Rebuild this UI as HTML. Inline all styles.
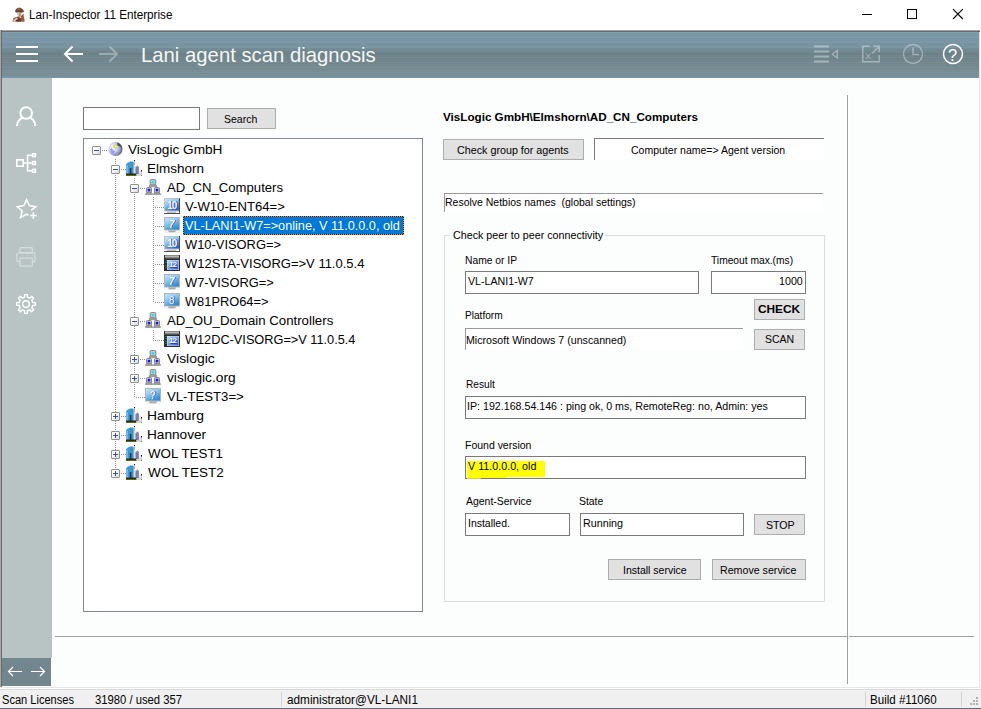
<!DOCTYPE html>
<html><head><meta charset="utf-8"><title>Lan-Inspector 11 Enterprise</title>
<style>
*{box-sizing:border-box;margin:0;padding:0}
html,body{width:981px;height:709px;overflow:hidden;background:#fff}
body{position:relative;font-family:"Liberation Sans",sans-serif;color:#000}
.a{position:absolute;white-space:nowrap}
.t{position:absolute;white-space:nowrap;line-height:1;transform-origin:0 0}
#frameL{left:0;top:30px;width:2px;height:657px;background:linear-gradient(90deg,#a6a6a6 50%,#696969 50%)}
#frameT{left:0;top:30px;width:980px;height:2px;background:linear-gradient(#a3a3a3 50%,#696969 50%)}
#frameR{left:979px;top:32px;width:1px;height:656px;background:#e3e3e3}
#frameB2{left:0;top:687px;width:980px;height:1px;background:#e6e6e6}
#hdr{left:2px;top:32px;width:977px;height:46px;background:repeating-linear-gradient(rgba(255,255,255,.035) 0,rgba(255,255,255,.035) 1px,rgba(0,0,0,.02) 1px,rgba(0,0,0,.02) 2px,transparent 2px,transparent 5px),linear-gradient(#7ba1b9 0,#7b98a9 1px,#7a96a6 8px,#7893a1 15px,#71898f 18.500px,#6c8188 21.500px,#6f858b 25px,#74898f 32px,#7a9097 44px,#7393a9 45px,#7393a9 46px)}
#side{left:2px;top:78px;width:50px;height:580px;background:#b8c4c3}
#sideB{left:2px;top:658px;width:49px;height:28px;background:#72868d}
#content{left:52px;top:78px;width:927px;height:609px;background:#fcfdfd}
#status{left:0;top:689px;width:981px;height:19px;background:#f0f0f0;border-top:1px solid #d9d9d9}
#frameB{left:0;top:708px;width:981px;height:1px;background:#5f6e74}
.seg{font-size:12px}
.tree{font-size:13px}
.f11{font-size:11px}
.btn{position:absolute;background:#e1e1e1;border:1px solid #adadad;font-size:11px;text-align:center;white-space:nowrap}
.inp{position:absolute;background:#fff;border:1px solid #7a7a7a}
.dv{width:1px;background-image:linear-gradient(#8c8c8c 50%,transparent 50%);background-size:1px 2px}
.dh{height:1px;background-image:linear-gradient(90deg,#8c8c8c 50%,transparent 50%);background-size:2px 1px}
.ln{position:absolute;background:#a0a0a0}
</style></head><body>
<div class="a" id="frameT"></div><div class="a" id="frameL"></div><div class="a" id="frameR"></div><div class="a" id="frameB2"></div>
<div class="a" id="hdr"></div>
<div class="a" id="side"></div><div class="a" id="sideB"></div>
<div class="a" id="content"></div>
<div class="a" id="status"></div><div class="a" id="frameB"></div>

<!-- TITLEBAR -->
<svg class="a" style="left:12px;top:7px" width="13" height="15" viewBox="0 0 13 15"><path d="M3 4.500 Q3.500 1 7.500 0.500 Q11.500 1.500 12 5 L9.500 5.800 L4 5.500 Z" fill="#6b4531"/><path d="M5 1.500 Q7 0.800 9 1.800 L8 3 L5.500 3 Z" fill="#94664a"/><path d="M5 5.500 L9.500 6 L9 10 L6 10.500 Z" fill="#cdbcae"/><path d="M7 6.500 L8.800 6.500 L8.500 9.500 L7.300 9.500 Z" fill="#9a8f8a"/><path d="M0.500 14.500 L1.500 11 L6 9.500 L9 11 L12 10 L12.500 14.500 Z" fill="#7e4a30"/><path d="M1 13 L5 10.500 L6 12 L2 14.500 Z" fill="#e2d2c4"/><path d="M9 9 L11.500 6.500 L12.300 14.500 L9.500 14.500 Z" fill="#a05c3c"/><path d="M4 13 L8 12 L9 14.500 L4.500 14.500 Z" fill="#5a3322"/></svg>
<div class="t seg" id="ttl" style="transform:scaleX(0.9357);left:28.61px;top:8.5px;font-size:12.5px">Lan-Inspector 11 Enterprise</div>
<svg class="a" style="left:850px;top:0" width="131" height="30" viewBox="0 0 131 30"><g stroke="#000" stroke-width="1" fill="none"><path d="M12 14.5 H22"/><rect x="57.5" y="9.5" width="9" height="9"/><path d="M103 9.200 L112.800 19 M112.800 9.200 L103 19" stroke-width="1.1"/></g></svg>

<!-- HEADER -->
<svg class="a" style="left:2px;top:32px" width="977" height="46" viewBox="2 32 977 46">
 <g stroke="#fff" stroke-width="2" fill="none">
  <path d="M16 47 H38 M16 54 H38 M16 61 H38"/>
  <path d="M83 54 H65 M72.5 46.5 L65 54 L72.5 61.5"/>
  <path d="M99 54 H117 M109.5 46.5 L117 54 L109.5 61.5" opacity="0.32"/>
 </g>
 <g stroke="#fff" fill="none" opacity="0.36">
  <path d="M814 46.5 H829 M814 51.5 H829 M814 56.5 H829 M814 61.5 H829" stroke-width="1.8"/>
  <path d="M837.3 50.3 V58 L832.3 54.2 Z" stroke-width="1.4" stroke-linejoin="round"/>
  <path d="M870 46.3 H862.8 V61.800 H879.2 V55" stroke-width="1.5"/>
  <path d="M872 53.5 L879 46.5 M873.5 46.3 H879.2 V52" stroke-width="1.6"/>
  <path d="M866 53.5 L870.5 59 M870.5 53.5 L866 59" stroke-width="1.1"/>
  <circle cx="913" cy="54" r="9.5" stroke-width="1.3"/>
  <path d="M913 47.5 V54.5 H919" stroke-width="1.5"/>
 </g>
 <circle cx="953" cy="54" r="9.5" stroke="#fff" stroke-width="1.5" fill="none"/>
</svg>
<div class="t" id="htitle" style="transform:scaleX(0.9667);left:141.09px;top:43.5px;font-size:21px;color:#f4f7f8">Lani agent scan diagnosis</div>
<div class="t" id="hq" style="left:948px;top:46.5px;font-size:16.5px;color:#fff">?</div>

<!-- SIDEBAR -->
<svg class="a" style="left:2px;top:78px" width="50" height="610" viewBox="2 78 50 610">
 <g stroke="#fff" stroke-width="2" fill="none">
  <path d="M17 126 A9.2 9.2 0 0 1 35.4 126"/>
  <circle cx="26.2" cy="113" r="5.8" fill="#b8c4c3"/>
 </g>
 <g stroke="#fff" stroke-width="1.6" fill="none">
  <rect x="16.8" y="159.8" width="6.4" height="6.4"/>
  <path d="M23 163 H32 M32 155.2 H27.6 V170.8 H32"/>
  <rect x="32.600" y="153.8" width="2.8" height="2.8"/><rect x="32.600" y="161.6" width="2.8" height="2.8"/><rect x="32.600" y="169.4" width="2.8" height="2.8"/>
 </g>
 <g stroke="#fff" stroke-width="1.5" fill="none" stroke-linejoin="miter">
  <path d="M31.1 210.4 L35.8 206.7 L29.4 205.6 L26.6 199.8 L23.8 205.6 L17.2 206.7 L22.3 211 L20.6 217.6 L26.6 214.2 L28.4 215.4"/>
  <path d="M33.4 212.3 V218.8 M30.2 215.5 H36.7" stroke-width="1.5"/>
 </g>
 <g stroke="#fff" stroke-width="1.2" fill="none" opacity="0.42">
  <rect x="20" y="247.700" width="12.3" height="5.1" rx="0.5"/>
  <rect x="16.800" y="252.800" width="18.3" height="8.800" rx="1.6"/>
  <rect x="20" y="258.100" width="12.3" height="8" rx="0.5" fill="#b8c4c3"/>
  <circle cx="32.6" cy="255.3" r="0.5" fill="#fff" stroke="none"/>
 </g>
 <g stroke="#fff" stroke-width="1.4" fill="none">
  <circle cx="26" cy="304" r="3.3"/>
  <path d="M24.60 297.24 L24.60 294.60 L27.40 294.60 L27.40 297.24 A6.9 6.9 0 0 1 29.79 298.23 L31.66 296.36 L33.64 298.34 L31.77 300.21 A6.9 6.9 0 0 1 32.76 302.60 L35.40 302.60 L35.40 305.40 L32.76 305.40 A6.9 6.9 0 0 1 31.77 307.79 L33.64 309.66 L31.66 311.64 L29.79 309.77 A6.9 6.9 0 0 1 27.40 310.76 L27.40 313.40 L24.60 313.40 L24.60 310.76 A6.9 6.9 0 0 1 22.21 309.77 L20.34 311.64 L18.36 309.66 L20.23 307.79 A6.9 6.9 0 0 1 19.24 305.40 L16.60 305.40 L16.60 302.60 L19.24 302.60 A6.9 6.9 0 0 1 20.23 300.21 L18.36 298.34 L20.34 296.36 L22.21 298.23 A6.9 6.9 0 0 1 24.60 297.24 Z" stroke-linejoin="round"/>
 </g>
 <g stroke="#fff" stroke-width="1.2" fill="none">
  <path d="M22 671.5 H8.5 M13 667 L8.500 671.5 L13 676"/>
  <path d="M31 671.5 H44.5 M40 667 L44.500 671.5 L40 676"/>
 </g>
</svg>

<!-- LEFT PANEL -->
<div class="inp" style="left:83px;top:107px;width:117px;height:23px"></div>
<div class="btn" style="left:207px;top:108px;width:69px;height:21px"></div><div class="t f11" id="bsearch" style="transform:scaleX(0.9552);left:224.09px;top:114px">Search</div>
<div class="a" id="treebox" style="left:83px;top:138px;width:340px;height:474px;background:#fff;border:1px solid #828790"></div>
<div class="a dv" style="left:115px;top:159px;height:314px"></div>
<div class="a dv" style="left:134px;top:178px;height:220px"></div>
<div class="a dv" style="left:153px;top:197px;height:106px"></div>
<div class="a dv" style="left:153px;top:330px;height:11px"></div>
<div class="a dh" style="left:98px;top:150px;width:9px"></div>
<div class="a" style="left:92px;top:146px;width:9px;height:9px;border:1px solid #919191;background:linear-gradient(135deg,#fff 30%,#d9d9d9);border-radius:1px"></div><div class="a" style="left:94px;top:150px;width:5px;height:1px;background:#3b4f9e"></div>
<svg class="a" style="left:108px;top:141px" width="16" height="16" viewBox="0 0 16 16"><defs><radialGradient id="i1" cx="0.32" cy="0.4" r="0.75"><stop offset="0" stop-color="#ffffff"/><stop offset="0.45" stop-color="#c9cdf6"/><stop offset="0.75" stop-color="#8e93b8"/><stop offset="1" stop-color="#3a3a40"/></radialGradient></defs><circle cx="7.5" cy="8" r="7" fill="url(#i1)"/><path d="M9 1.5 Q14 3 14.300 8 Q13 5 9.5 4.500 Z" fill="#4a4a4e"/><path d="M2 8 L4 7 L5 9.5 L7 10 L6 12.500 L3.500 12 Z" fill="#8f8ff0" opacity="0.85"/><path d="M6.500 12.500 L9 11.500 L10 13.500 L7.500 14.500 Z" fill="#9a9af0" opacity="0.8"/><path d="M5.500 4.500 L7.500 2.500 L8.300 4.800 L10.500 5.500 L8.500 6.800 L8 9 L6.800 7 L4.500 6.500 Z" fill="#d6e04a"/><path d="M7 5 L8 4.500 L8.300 5.800 L7.300 6.200 Z" fill="#fffbe0"/></svg>
<div class="t tree" id="tr0" style="transform:scaleX(1.0486);left:128.00px;top:143px">VisLogic GmbH</div>
<div class="a dh" style="left:117px;top:169px;width:9px"></div>
<div class="a" style="left:111px;top:165px;width:9px;height:9px;border:1px solid #919191;background:linear-gradient(135deg,#fff 30%,#d9d9d9);border-radius:1px"></div><div class="a" style="left:113px;top:169px;width:5px;height:1px;background:#3b4f9e"></div>
<svg class="a" style="left:126px;top:160px" width="16" height="16" viewBox="0 0 16 16"><path d="M0 15 L0 4.200 L2 2.600 L4 1.600 L7 1.500 L8.200 3 L8.200 15 Z" fill="#3a98dc"/><rect x="0.200" y="5" width="1.600" height="9" fill="#86b8f0"/><rect x="3.800" y="8" width="1.800" height="7" fill="#0a3a5c"/><rect x="5.600" y="3" width="1.800" height="12" fill="#3a9c94"/><rect x="7.200" y="2.500" width="1" height="12" fill="#a8a8e4"/><rect x="8" y="0" width="1" height="1.200" fill="#111"/><rect x="8.200" y="1.200" width="0.600" height="4" fill="#9a9a9a"/><rect x="8.600" y="6" width="1.200" height="5" fill="#cfeaff"/><path d="M9.400 14 L9.400 7.500 L11.500 5.300 L13 7 L13.300 14 Z" fill="#8e8e9a"/><rect x="10" y="7.500" width="1.400" height="6.500" fill="#7474c4"/><path d="M13.300 11.500 L15 9.800 L15 14 L13.300 14 Z" fill="#d8ecfc"/><rect x="15" y="10" width="1" height="1.600" fill="#111"/><rect x="15.200" y="11.600" width="0.600" height="3" fill="#9a9a9a"/><rect x="0" y="13.500" width="10.500" height="2.300" fill="#26301a"/><rect x="0" y="15" width="10.500" height="0.900" fill="#66660e"/><rect x="10.500" y="14" width="5.500" height="1.800" fill="#d2d2d2"/><rect x="15" y="15" width="1" height="0.900" fill="#8a8a20"/></svg>
<div class="t tree" id="tr1" style="transform:scaleX(1.0365);left:146.99px;top:162px">Elmshorn</div>
<div class="a dh" style="left:136px;top:188px;width:9px"></div>
<div class="a" style="left:130px;top:184px;width:9px;height:9px;border:1px solid #919191;background:linear-gradient(135deg,#fff 30%,#d9d9d9);border-radius:1px"></div><div class="a" style="left:132px;top:188px;width:5px;height:1px;background:#3b4f9e"></div>
<svg class="a" style="left:145px;top:179px" width="16" height="16" viewBox="0 0 16 16"><rect x="5.2" y="0.5999999999999996" width="5.6" height="5.400" rx="1" fill="#cfcfcf" stroke="#6a6a6a" stroke-width="0.8"/><rect x="6.7" y="1.9" width="2.600" height="2.600" fill="#10e8f8"/><path d="M4.2 7.699999999999999 L4.7 6.1 L11.3 6.1 L11.8 7.699999999999999 Z" fill="#b8b8b8" stroke="#6a6a6a" stroke-width="0.6"/><rect x="1.5" y="8.5" width="5.0" height="5.400" rx="1" fill="#cfcfcf" stroke="#6a6a6a" stroke-width="0.8"/><rect x="2.7" y="9.799999999999999" width="2.600" height="2.600" fill="#1018f0"/><path d="M0.5 15.6 L1.0 14.0 L7.0 14.0 L7.5 15.6 Z" fill="#b8b8b8" stroke="#6a6a6a" stroke-width="0.6"/><rect x="9.5" y="8.5" width="5.0" height="5.400" rx="1" fill="#cfcfcf" stroke="#6a6a6a" stroke-width="0.8"/><rect x="10.7" y="9.799999999999999" width="2.600" height="2.600" fill="#1018f0"/><path d="M8.5 15.6 L9.0 14.0 L15.0 14.0 L15.5 15.6 Z" fill="#b8b8b8" stroke="#6a6a6a" stroke-width="0.6"/></svg>
<div class="t tree" id="tr2" style="transform:scaleX(1.0101);left:166.50px;top:181px">AD_CN_Computers</div>
<div class="a dh" style="left:155px;top:207px;width:9px"></div>
<svg class="a" style="left:164px;top:198px" width="16" height="16" viewBox="0 0 16 16"><defs><linearGradient id="i4" x1="0" y1="0" x2="0.600" y2="1"><stop offset="0" stop-color="#c4e6ff"/><stop offset="0.450" stop-color="#8cc8f4"/><stop offset="1" stop-color="#2468e0"/></linearGradient></defs><rect x="0" y="0" width="15.500" height="13.500" fill="#c6c2be"/><rect x="1" y="1" width="14" height="11.500" fill="url(#i4)"/><rect x="15" y="0" width="1" height="16" fill="#4e4e4e"/><rect x="0" y="15" width="16" height="1" fill="#4e4e4e"/><rect x="3" y="13.500" width="9" height="1.500" fill="#bdbdbd"/><text x="8.600" y="11.200" font-family="Liberation Sans,sans-serif" font-size="10" font-weight="bold" fill="#2418d0" text-anchor="middle" letter-spacing="-1">10</text><text x="7.800" y="10.600" font-family="Liberation Sans,sans-serif" font-size="10" font-weight="bold" fill="#fff" text-anchor="middle" letter-spacing="-1">10</text></svg>
<div class="t tree" id="tr3" style="transform:scaleX(1.0097);left:185.00px;top:200px">V-W10-ENT64=></div>
<div class="a dh" style="left:155px;top:226px;width:9px"></div>
<svg class="a" style="left:164px;top:217px" width="16" height="16" viewBox="0 0 16 16"><defs><linearGradient id="i5" x1="0" y1="0" x2="0.600" y2="1"><stop offset="0" stop-color="#c4e6ff"/><stop offset="0.450" stop-color="#8cc8f4"/><stop offset="1" stop-color="#2f8fd0"/></linearGradient></defs><rect x="0" y="0" width="15.500" height="13.500" fill="#b4b4b4"/><rect x="1" y="1" width="14" height="11.500" fill="url(#i5)"/><rect x="15" y="0" width="1" height="13.500" fill="#b4b4b4"/><path d="M4 13.500 H12 L11 15.500 H5 Z" fill="#9a9a9a"/><rect x="0.500" y="14.800" width="15" height="0.800" fill="#e4e4e4"/><text x="8.600" y="11.200" font-family="Liberation Sans,sans-serif" font-size="10" font-weight="bold" fill="#2418d0" text-anchor="middle" font-style="italic">7</text><text x="7.800" y="10.600" font-family="Liberation Sans,sans-serif" font-size="10" font-weight="bold" fill="#fff" text-anchor="middle" font-style="italic">7</text></svg>
<div class="a" id="sel" style="left:183px;top:216px;width:221px;height:19px;background:#0078d7;border:1px solid #1a2430;outline:1px dotted #ff8a2a;outline-offset:-1px"></div>
<div class="t tree" id="tr4" style="transform:scaleX(0.976);left:185.35px;top:219px;color:#fff">VL-LANI1-W7=>online, V 11.0.0.0, old</div>
<div class="a dh" style="left:155px;top:245px;width:9px"></div>
<svg class="a" style="left:164px;top:236px" width="16" height="16" viewBox="0 0 16 16"><defs><linearGradient id="i6" x1="0" y1="0" x2="0.600" y2="1"><stop offset="0" stop-color="#c4e6ff"/><stop offset="0.450" stop-color="#8cc8f4"/><stop offset="1" stop-color="#2468e0"/></linearGradient></defs><rect x="0" y="0" width="15.500" height="13.500" fill="#c6c2be"/><rect x="1" y="1" width="14" height="11.500" fill="url(#i6)"/><rect x="15" y="0" width="1" height="16" fill="#4e4e4e"/><rect x="0" y="15" width="16" height="1" fill="#4e4e4e"/><rect x="3" y="13.500" width="9" height="1.500" fill="#bdbdbd"/><text x="8.600" y="11.200" font-family="Liberation Sans,sans-serif" font-size="10" font-weight="bold" fill="#2418d0" text-anchor="middle" letter-spacing="-1">10</text><text x="7.800" y="10.600" font-family="Liberation Sans,sans-serif" font-size="10" font-weight="bold" fill="#fff" text-anchor="middle" letter-spacing="-1">10</text></svg>
<div class="t tree" id="tr5" style="transform:scaleX(0.9913);left:185.00px;top:238px">W10-VISORG=></div>
<div class="a dh" style="left:155px;top:264px;width:9px"></div>
<svg class="a" style="left:164px;top:255px" width="16" height="16" viewBox="0 0 16 16"><defs><linearGradient id="i7" x1="0" y1="0" x2="0" y2="1"><stop offset="0" stop-color="#e8e8e8"/><stop offset="1" stop-color="#3a3a3a"/></linearGradient><linearGradient id="i7b" x1="0" y1="0" x2="1" y2="1"><stop offset="0" stop-color="#b8e4ff"/><stop offset="1" stop-color="#2a58d8"/></linearGradient></defs><rect x="0" y="0" width="16" height="16" fill="#2c2c2c"/><rect x="1" y="0.500" width="14" height="3.500" fill="url(#i7)"/><rect x="3" y="5" width="12" height="10" fill="#d8dce8"/><rect x="3.500" y="5.500" width="11" height="9" fill="url(#i7b)"/><rect x="1.500" y="5" width="1" height="1" fill="#20c020"/><rect x="1.500" y="7" width="1" height="1" fill="#20c0c0"/><rect x="1.500" y="10" width="1" height="1" fill="#20c020"/><rect x="1.500" y="12" width="1" height="1" fill="#20c020"/><text x="9.300" y="12.800" font-family="Liberation Sans,sans-serif" font-size="7.500" font-weight="bold" fill="#2038c8" text-anchor="middle" letter-spacing="-0.5">12</text><text x="8.800" y="12.300" font-family="Liberation Sans,sans-serif" font-size="7.500" font-weight="bold" fill="#fff" text-anchor="middle" letter-spacing="-0.5">12</text></svg>
<div class="t tree" id="tr6" style="transform:scaleX(0.9998);left:185.36px;top:257px">W12STA-VISORG=>V 11.0.5.4</div>
<div class="a dh" style="left:155px;top:283px;width:9px"></div>
<svg class="a" style="left:164px;top:274px" width="16" height="16" viewBox="0 0 16 16"><defs><linearGradient id="i8" x1="0" y1="0" x2="0.600" y2="1"><stop offset="0" stop-color="#c4e6ff"/><stop offset="0.450" stop-color="#8cc8f4"/><stop offset="1" stop-color="#2f8fd0"/></linearGradient></defs><rect x="0" y="0" width="15.500" height="13.500" fill="#b4b4b4"/><rect x="1" y="1" width="14" height="11.500" fill="url(#i8)"/><rect x="15" y="0" width="1" height="13.500" fill="#b4b4b4"/><path d="M4 13.500 H12 L11 15.500 H5 Z" fill="#9a9a9a"/><rect x="0.500" y="14.800" width="15" height="0.800" fill="#e4e4e4"/><text x="8.600" y="11.200" font-family="Liberation Sans,sans-serif" font-size="10" font-weight="bold" fill="#2418d0" text-anchor="middle" font-style="italic">7</text><text x="7.800" y="10.600" font-family="Liberation Sans,sans-serif" font-size="10" font-weight="bold" fill="#fff" text-anchor="middle" font-style="italic">7</text></svg>
<div class="t tree" id="tr7" style="transform:scaleX(0.9912);left:185.00px;top:276px">W7-VISORG=></div>
<div class="a dh" style="left:155px;top:302px;width:9px"></div>
<svg class="a" style="left:164px;top:293px" width="16" height="16" viewBox="0 0 16 16"><defs><linearGradient id="i9" x1="0" y1="0" x2="0.600" y2="1"><stop offset="0" stop-color="#c4e6ff"/><stop offset="0.450" stop-color="#8cc8f4"/><stop offset="1" stop-color="#2f8fd0"/></linearGradient></defs><rect x="0" y="0" width="15.500" height="13.500" fill="#b4b4b4"/><rect x="1" y="1" width="14" height="11.500" fill="url(#i9)"/><rect x="15" y="0" width="1" height="13.500" fill="#b4b4b4"/><path d="M4 13.500 H12 L11 15.500 H5 Z" fill="#9a9a9a"/><rect x="0.500" y="14.800" width="15" height="0.800" fill="#e4e4e4"/><text x="8.600" y="11.200" font-family="Liberation Sans,sans-serif" font-size="10" font-weight="normal" fill="#2418d0" text-anchor="middle">8</text><text x="7.800" y="10.600" font-family="Liberation Sans,sans-serif" font-size="10" font-weight="normal" fill="#fff" text-anchor="middle">8</text></svg>
<div class="t tree" id="tr8" style="transform:scaleX(0.9878);left:185.00px;top:295px">W81PRO64=></div>
<div class="a dh" style="left:136px;top:321px;width:9px"></div>
<div class="a" style="left:130px;top:317px;width:9px;height:9px;border:1px solid #919191;background:linear-gradient(135deg,#fff 30%,#d9d9d9);border-radius:1px"></div><div class="a" style="left:132px;top:321px;width:5px;height:1px;background:#3b4f9e"></div>
<svg class="a" style="left:145px;top:312px" width="16" height="16" viewBox="0 0 16 16"><rect x="5.2" y="0.5999999999999996" width="5.6" height="5.400" rx="1" fill="#cfcfcf" stroke="#6a6a6a" stroke-width="0.8"/><rect x="6.7" y="1.9" width="2.600" height="2.600" fill="#10e8f8"/><path d="M4.2 7.699999999999999 L4.7 6.1 L11.3 6.1 L11.8 7.699999999999999 Z" fill="#b8b8b8" stroke="#6a6a6a" stroke-width="0.6"/><rect x="1.5" y="8.5" width="5.0" height="5.400" rx="1" fill="#cfcfcf" stroke="#6a6a6a" stroke-width="0.8"/><rect x="2.7" y="9.799999999999999" width="2.600" height="2.600" fill="#1018f0"/><path d="M0.5 15.6 L1.0 14.0 L7.0 14.0 L7.5 15.6 Z" fill="#b8b8b8" stroke="#6a6a6a" stroke-width="0.6"/><rect x="9.5" y="8.5" width="5.0" height="5.400" rx="1" fill="#cfcfcf" stroke="#6a6a6a" stroke-width="0.8"/><rect x="10.7" y="9.799999999999999" width="2.600" height="2.600" fill="#1018f0"/><path d="M8.5 15.6 L9.0 14.0 L15.0 14.0 L15.5 15.6 Z" fill="#b8b8b8" stroke="#6a6a6a" stroke-width="0.6"/></svg>
<div class="t tree" id="tr9" style="transform:scaleX(1.0182);left:166.50px;top:314px">AD_OU_Domain Controllers</div>
<div class="a dh" style="left:155px;top:340px;width:9px"></div>
<svg class="a" style="left:164px;top:331px" width="16" height="16" viewBox="0 0 16 16"><defs><linearGradient id="i11" x1="0" y1="0" x2="0" y2="1"><stop offset="0" stop-color="#e8e8e8"/><stop offset="1" stop-color="#3a3a3a"/></linearGradient><linearGradient id="i11b" x1="0" y1="0" x2="1" y2="1"><stop offset="0" stop-color="#b8e4ff"/><stop offset="1" stop-color="#2a58d8"/></linearGradient></defs><rect x="0" y="0" width="16" height="16" fill="#2c2c2c"/><rect x="1" y="0.500" width="14" height="3.500" fill="url(#i11)"/><rect x="3" y="5" width="12" height="10" fill="#d8dce8"/><rect x="3.500" y="5.500" width="11" height="9" fill="url(#i11b)"/><rect x="1.500" y="5" width="1" height="1" fill="#20c020"/><rect x="1.500" y="7" width="1" height="1" fill="#20c0c0"/><rect x="1.500" y="10" width="1" height="1" fill="#20c020"/><rect x="1.500" y="12" width="1" height="1" fill="#20c020"/><text x="9.300" y="12.800" font-family="Liberation Sans,sans-serif" font-size="7.500" font-weight="bold" fill="#2038c8" text-anchor="middle" letter-spacing="-0.5">12</text><text x="8.800" y="12.300" font-family="Liberation Sans,sans-serif" font-size="7.500" font-weight="bold" fill="#fff" text-anchor="middle" letter-spacing="-0.5">12</text></svg>
<div class="t tree" id="tr10" style="transform:scaleX(0.98);left:185.00px;top:333px">W12DC-VISORG=>V 11.0.5.4</div>
<div class="a dh" style="left:136px;top:359px;width:9px"></div>
<div class="a" style="left:130px;top:355px;width:9px;height:9px;border:1px solid #919191;background:linear-gradient(135deg,#fff 30%,#d9d9d9);border-radius:1px"></div><div class="a" style="left:132px;top:359px;width:5px;height:1px;background:#3b4f9e"></div><div class="a" style="left:134px;top:357px;width:1px;height:5px;background:#3b4f9e"></div>
<svg class="a" style="left:145px;top:350px" width="16" height="16" viewBox="0 0 16 16"><rect x="5.2" y="0.5999999999999996" width="5.6" height="5.400" rx="1" fill="#cfcfcf" stroke="#6a6a6a" stroke-width="0.8"/><rect x="6.7" y="1.9" width="2.600" height="2.600" fill="#10e8f8"/><path d="M4.2 7.699999999999999 L4.7 6.1 L11.3 6.1 L11.8 7.699999999999999 Z" fill="#b8b8b8" stroke="#6a6a6a" stroke-width="0.6"/><rect x="1.5" y="8.5" width="5.0" height="5.400" rx="1" fill="#cfcfcf" stroke="#6a6a6a" stroke-width="0.8"/><rect x="2.7" y="9.799999999999999" width="2.600" height="2.600" fill="#1018f0"/><path d="M0.5 15.6 L1.0 14.0 L7.0 14.0 L7.5 15.6 Z" fill="#b8b8b8" stroke="#6a6a6a" stroke-width="0.6"/><rect x="9.5" y="8.5" width="5.0" height="5.400" rx="1" fill="#cfcfcf" stroke="#6a6a6a" stroke-width="0.8"/><rect x="10.7" y="9.799999999999999" width="2.600" height="2.600" fill="#1018f0"/><path d="M8.5 15.6 L9.0 14.0 L15.0 14.0 L15.5 15.6 Z" fill="#b8b8b8" stroke="#6a6a6a" stroke-width="0.6"/></svg>
<div class="t tree" id="tr11" style="transform:scaleX(1.0722);left:166.51px;top:352px">Vislogic</div>
<div class="a dh" style="left:136px;top:378px;width:9px"></div>
<div class="a" style="left:130px;top:374px;width:9px;height:9px;border:1px solid #919191;background:linear-gradient(135deg,#fff 30%,#d9d9d9);border-radius:1px"></div><div class="a" style="left:132px;top:378px;width:5px;height:1px;background:#3b4f9e"></div><div class="a" style="left:134px;top:376px;width:1px;height:5px;background:#3b4f9e"></div>
<svg class="a" style="left:145px;top:369px" width="16" height="16" viewBox="0 0 16 16"><rect x="5.2" y="0.5999999999999996" width="5.6" height="5.400" rx="1" fill="#cfcfcf" stroke="#6a6a6a" stroke-width="0.8"/><rect x="6.7" y="1.9" width="2.600" height="2.600" fill="#10e8f8"/><path d="M4.2 7.699999999999999 L4.7 6.1 L11.3 6.1 L11.8 7.699999999999999 Z" fill="#b8b8b8" stroke="#6a6a6a" stroke-width="0.6"/><rect x="1.5" y="8.5" width="5.0" height="5.400" rx="1" fill="#cfcfcf" stroke="#6a6a6a" stroke-width="0.8"/><rect x="2.7" y="9.799999999999999" width="2.600" height="2.600" fill="#1018f0"/><path d="M0.5 15.6 L1.0 14.0 L7.0 14.0 L7.5 15.6 Z" fill="#b8b8b8" stroke="#6a6a6a" stroke-width="0.6"/><rect x="9.5" y="8.5" width="5.0" height="5.400" rx="1" fill="#cfcfcf" stroke="#6a6a6a" stroke-width="0.8"/><rect x="10.7" y="9.799999999999999" width="2.600" height="2.600" fill="#1018f0"/><path d="M8.5 15.6 L9.0 14.0 L15.0 14.0 L15.5 15.6 Z" fill="#b8b8b8" stroke="#6a6a6a" stroke-width="0.6"/></svg>
<div class="t tree" id="tr12" style="transform:scaleX(1.0552);left:166.50px;top:371px">vislogic.org</div>
<div class="a dh" style="left:136px;top:397px;width:9px"></div>
<svg class="a" style="left:145px;top:388px" width="16" height="16" viewBox="0 0 16 16"><defs><linearGradient id="i14" x1="0" y1="0" x2="0.600" y2="1"><stop offset="0" stop-color="#c4e6ff"/><stop offset="0.450" stop-color="#8cc8f4"/><stop offset="1" stop-color="#2f8fd0"/></linearGradient></defs><rect x="0" y="0" width="15.500" height="13.500" fill="#b4b4b4"/><rect x="1" y="1" width="14" height="11.500" fill="url(#i14)"/><rect x="15" y="0" width="1" height="13.500" fill="#b4b4b4"/><path d="M4 13.500 H12 L11 15.500 H5 Z" fill="#9a9a9a"/><rect x="0.500" y="14.800" width="15" height="0.800" fill="#e4e4e4"/><text x="8.600" y="11.200" font-family="Liberation Sans,sans-serif" font-size="10" font-weight="bold" fill="#2418d0" text-anchor="middle">?</text><text x="7.800" y="10.600" font-family="Liberation Sans,sans-serif" font-size="10" font-weight="bold" fill="#fff" text-anchor="middle">?</text></svg>
<div class="t tree" id="tr13" style="transform:scaleX(1.0121);left:166.50px;top:390px">VL-TEST3=></div>
<div class="a dh" style="left:117px;top:416px;width:9px"></div>
<div class="a" style="left:111px;top:412px;width:9px;height:9px;border:1px solid #919191;background:linear-gradient(135deg,#fff 30%,#d9d9d9);border-radius:1px"></div><div class="a" style="left:113px;top:416px;width:5px;height:1px;background:#3b4f9e"></div><div class="a" style="left:115px;top:414px;width:1px;height:5px;background:#3b4f9e"></div>
<svg class="a" style="left:126px;top:407px" width="16" height="16" viewBox="0 0 16 16"><path d="M0 15 L0 4.200 L2 2.600 L4 1.600 L7 1.500 L8.200 3 L8.200 15 Z" fill="#3a98dc"/><rect x="0.200" y="5" width="1.600" height="9" fill="#86b8f0"/><rect x="3.800" y="8" width="1.800" height="7" fill="#0a3a5c"/><rect x="5.600" y="3" width="1.800" height="12" fill="#3a9c94"/><rect x="7.200" y="2.500" width="1" height="12" fill="#a8a8e4"/><rect x="8" y="0" width="1" height="1.200" fill="#111"/><rect x="8.200" y="1.200" width="0.600" height="4" fill="#9a9a9a"/><rect x="8.600" y="6" width="1.200" height="5" fill="#cfeaff"/><path d="M9.400 14 L9.400 7.500 L11.500 5.300 L13 7 L13.300 14 Z" fill="#8e8e9a"/><rect x="10" y="7.500" width="1.400" height="6.500" fill="#7474c4"/><path d="M13.300 11.500 L15 9.800 L15 14 L13.300 14 Z" fill="#d8ecfc"/><rect x="15" y="10" width="1" height="1.600" fill="#111"/><rect x="15.200" y="11.600" width="0.600" height="3" fill="#9a9a9a"/><rect x="0" y="13.500" width="10.500" height="2.300" fill="#26301a"/><rect x="0" y="15" width="10.500" height="0.900" fill="#66660e"/><rect x="10.500" y="14" width="5.500" height="1.800" fill="#d2d2d2"/><rect x="15" y="15" width="1" height="0.900" fill="#8a8a20"/></svg>
<div class="t tree" id="tr14" style="transform:scaleX(1.063);left:147.16px;top:409px">Hamburg</div>
<div class="a dh" style="left:117px;top:435px;width:9px"></div>
<div class="a" style="left:111px;top:431px;width:9px;height:9px;border:1px solid #919191;background:linear-gradient(135deg,#fff 30%,#d9d9d9);border-radius:1px"></div><div class="a" style="left:113px;top:435px;width:5px;height:1px;background:#3b4f9e"></div><div class="a" style="left:115px;top:433px;width:1px;height:5px;background:#3b4f9e"></div>
<svg class="a" style="left:126px;top:426px" width="16" height="16" viewBox="0 0 16 16"><path d="M0 15 L0 4.200 L2 2.600 L4 1.600 L7 1.500 L8.200 3 L8.200 15 Z" fill="#3a98dc"/><rect x="0.200" y="5" width="1.600" height="9" fill="#86b8f0"/><rect x="3.800" y="8" width="1.800" height="7" fill="#0a3a5c"/><rect x="5.600" y="3" width="1.800" height="12" fill="#3a9c94"/><rect x="7.200" y="2.500" width="1" height="12" fill="#a8a8e4"/><rect x="8" y="0" width="1" height="1.200" fill="#111"/><rect x="8.200" y="1.200" width="0.600" height="4" fill="#9a9a9a"/><rect x="8.600" y="6" width="1.200" height="5" fill="#cfeaff"/><path d="M9.400 14 L9.400 7.500 L11.500 5.300 L13 7 L13.300 14 Z" fill="#8e8e9a"/><rect x="10" y="7.500" width="1.400" height="6.500" fill="#7474c4"/><path d="M13.300 11.500 L15 9.800 L15 14 L13.300 14 Z" fill="#d8ecfc"/><rect x="15" y="10" width="1" height="1.600" fill="#111"/><rect x="15.200" y="11.600" width="0.600" height="3" fill="#9a9a9a"/><rect x="0" y="13.500" width="10.500" height="2.300" fill="#26301a"/><rect x="0" y="15" width="10.500" height="0.900" fill="#66660e"/><rect x="10.500" y="14" width="5.500" height="1.800" fill="#d2d2d2"/><rect x="15" y="15" width="1" height="0.900" fill="#8a8a20"/></svg>
<div class="t tree" id="tr15" style="transform:scaleX(1.0484);left:147.21px;top:428px">Hannover</div>
<div class="a dh" style="left:117px;top:454px;width:9px"></div>
<div class="a" style="left:111px;top:450px;width:9px;height:9px;border:1px solid #919191;background:linear-gradient(135deg,#fff 30%,#d9d9d9);border-radius:1px"></div><div class="a" style="left:113px;top:454px;width:5px;height:1px;background:#3b4f9e"></div><div class="a" style="left:115px;top:452px;width:1px;height:5px;background:#3b4f9e"></div>
<svg class="a" style="left:126px;top:445px" width="16" height="16" viewBox="0 0 16 16"><path d="M0 15 L0 4.200 L2 2.600 L4 1.600 L7 1.500 L8.200 3 L8.200 15 Z" fill="#3a98dc"/><rect x="0.200" y="5" width="1.600" height="9" fill="#86b8f0"/><rect x="3.800" y="8" width="1.800" height="7" fill="#0a3a5c"/><rect x="5.600" y="3" width="1.800" height="12" fill="#3a9c94"/><rect x="7.200" y="2.500" width="1" height="12" fill="#a8a8e4"/><rect x="8" y="0" width="1" height="1.200" fill="#111"/><rect x="8.200" y="1.200" width="0.600" height="4" fill="#9a9a9a"/><rect x="8.600" y="6" width="1.200" height="5" fill="#cfeaff"/><path d="M9.400 14 L9.400 7.500 L11.500 5.300 L13 7 L13.300 14 Z" fill="#8e8e9a"/><rect x="10" y="7.500" width="1.400" height="6.500" fill="#7474c4"/><path d="M13.300 11.500 L15 9.800 L15 14 L13.300 14 Z" fill="#d8ecfc"/><rect x="15" y="10" width="1" height="1.600" fill="#111"/><rect x="15.200" y="11.600" width="0.600" height="3" fill="#9a9a9a"/><rect x="0" y="13.500" width="10.500" height="2.300" fill="#26301a"/><rect x="0" y="15" width="10.500" height="0.900" fill="#66660e"/><rect x="10.500" y="14" width="5.500" height="1.800" fill="#d2d2d2"/><rect x="15" y="15" width="1" height="0.900" fill="#8a8a20"/></svg>
<div class="t tree" id="tr16" style="transform:scaleX(1.0278);left:147.50px;top:447px">WOL TEST1</div>
<div class="a dh" style="left:117px;top:473px;width:9px"></div>
<div class="a" style="left:111px;top:469px;width:9px;height:9px;border:1px solid #919191;background:linear-gradient(135deg,#fff 30%,#d9d9d9);border-radius:1px"></div><div class="a" style="left:113px;top:473px;width:5px;height:1px;background:#3b4f9e"></div><div class="a" style="left:115px;top:471px;width:1px;height:5px;background:#3b4f9e"></div>
<svg class="a" style="left:126px;top:464px" width="16" height="16" viewBox="0 0 16 16"><path d="M0 15 L0 4.200 L2 2.600 L4 1.600 L7 1.500 L8.200 3 L8.200 15 Z" fill="#3a98dc"/><rect x="0.200" y="5" width="1.600" height="9" fill="#86b8f0"/><rect x="3.800" y="8" width="1.800" height="7" fill="#0a3a5c"/><rect x="5.600" y="3" width="1.800" height="12" fill="#3a9c94"/><rect x="7.200" y="2.500" width="1" height="12" fill="#a8a8e4"/><rect x="8" y="0" width="1" height="1.200" fill="#111"/><rect x="8.200" y="1.200" width="0.600" height="4" fill="#9a9a9a"/><rect x="8.600" y="6" width="1.200" height="5" fill="#cfeaff"/><path d="M9.400 14 L9.400 7.500 L11.500 5.300 L13 7 L13.300 14 Z" fill="#8e8e9a"/><rect x="10" y="7.500" width="1.400" height="6.500" fill="#7474c4"/><path d="M13.300 11.500 L15 9.800 L15 14 L13.300 14 Z" fill="#d8ecfc"/><rect x="15" y="10" width="1" height="1.600" fill="#111"/><rect x="15.200" y="11.600" width="0.600" height="3" fill="#9a9a9a"/><rect x="0" y="13.500" width="10.500" height="2.300" fill="#26301a"/><rect x="0" y="15" width="10.500" height="0.900" fill="#66660e"/><rect x="10.500" y="14" width="5.500" height="1.800" fill="#d2d2d2"/><rect x="15" y="15" width="1" height="0.900" fill="#8a8a20"/></svg>
<div class="t tree" id="tr17" style="transform:scaleX(1.0396);left:147.50px;top:466px">WOL TEST2</div>

<!-- RIGHT PANEL -->
<div class="t" id="rhead" style="transform:scaleX(1.0596);left:442.82px;top:112px;font-size:11px;font-weight:bold">VisLogic GmbH\Elmshorn\AD_CN_Computers</div>
<div class="btn" style="left:443px;top:139px;width:141px;height:21px"></div><div class="t f11" id="bcheckg" style="transform:scaleX(0.9758);left:457.20px;top:145px">Check group for agents</div>
<div class="a" style="left:594px;top:138px;width:230px;height:22px;background:#fff;border-top:1px solid #7a7a7a;border-left:1px solid #7a7a7a"></div>
<div class="t f11" id="cname" style="transform:scaleX(0.9551);left:631.29px;top:145px">Computer name=&gt; Agent version</div>
<div class="a" style="left:444px;top:193px;width:379px;height:19px;background:#fff;border-top:1px solid #9a9a9a;border-left:1px solid #9a9a9a"></div>
<div class="t f11" id="resolve" style="transform:scaleX(0.953);left:445.00px;top:197px">Resolve Netbios names&nbsp; (global settings)</div>

<div class="a" style="left:444px;top:235px;width:381px;height:367px;border:1px solid #dcdcdc"></div>
<div class="a" style="left:450px;top:230px;width:155px;height:11px;background:#fcfdfd"></div><div class="t f11" id="gbl" style="transform:scaleX(0.9748);left:452.54px;top:230px">Check peer to peer connectivity</div>

<div class="t f11" id="l1" style="transform:scaleX(0.9359);left:465.41px;top:255px">Name or IP</div>
<div class="t f11" id="l2" style="transform:scaleX(0.93);left:710.93px;top:255px">Timeout max.(ms)</div>
<div class="inp" style="left:465px;top:271px;width:234px;height:23px"></div>
<div class="t f11" id="v1" style="transform:scaleX(0.9672);left:468.00px;top:276px">VL-LANI1-W7</div>
<div class="inp" style="left:711px;top:271px;width:95px;height:23px"></div>
<div class="t f11" id="v2" style="transform:scaleX(0.9709);left:779.24px;top:276px">1000</div>
<div class="btn" style="left:754px;top:299px;width:51px;height:21px"></div><div class="t" id="bcheck" style="transform:scaleX(1.0772);left:758.31px;top:304px;font-weight:bold;font-size:11px">CHECK</div>
<div class="t f11" id="l3" style="transform:scaleX(0.9175);left:464.97px;top:310px">Platform</div>
<div class="a" style="left:465px;top:328px;width:278px;height:22px;background:#fff;border-top:1px solid #9a9a9a;border-left:1px solid #9a9a9a"></div>
<div class="t f11" id="v3" style="transform:scaleX(0.968);left:465.90px;top:335px">Microsoft Windows 7 (unscanned)</div>
<div class="btn" style="left:754px;top:329px;width:51px;height:21px"></div><div class="t f11" id="bscan" style="transform:scaleX(0.9555);left:765.01px;top:334px">SCAN</div>

<div class="t f11" id="l4" style="transform:scaleX(0.9215);left:465.56px;top:379px">Result</div>
<div class="inp" style="left:465px;top:396px;width:341px;height:23px"></div>
<div class="t f11" id="v4" style="transform:scaleX(0.9685);left:467.32px;top:401px">IP: 192.168.54.146 : ping ok, 0 ms, RemoteReg: no, Admin: yes</div>
<div class="t f11" id="l5" style="transform:scaleX(0.9528);left:464.98px;top:440px">Found version</div>
<div class="inp" style="left:465px;top:456px;width:341px;height:23px"></div>
<div class="a" style="left:467px;top:461px;width:78px;height:16px;background:#ffff00"></div><div class="a" style="left:467px;top:477px;width:39px;height:1px;background:#ffff00"></div><div class="a" style="left:467px;top:478px;width:14px;height:1px;background:#d8d83a"></div>
<div class="t f11" id="v5" style="transform:scaleX(0.975);left:467.70px;top:461px">V 11.0.0.0, old</div>
<div class="t f11" id="l6" style="transform:scaleX(0.9496);left:466.00px;top:496px">Agent-Service</div>
<div class="t f11" id="l7" style="transform:scaleX(0.9453);left:579.40px;top:496px">State</div>
<div class="inp" style="left:465px;top:513px;width:105px;height:23px"></div>
<div class="t f11" id="v6" style="transform:scaleX(0.9513);left:468.15px;top:518px">Installed.</div>
<div class="inp" style="left:580px;top:513px;width:164px;height:23px"></div>
<div class="t f11" id="v7" style="transform:scaleX(0.9764);left:583.01px;top:518px">Running</div>
<div class="btn" style="left:754px;top:514px;width:51px;height:21px"></div><div class="t f11" id="bstop" style="transform:scaleX(0.9645);left:765.64px;top:520px">STOP</div>
<div class="btn" style="left:608px;top:559px;width:93px;height:21px"></div><div class="t f11" id="binst" style="transform:scaleX(0.955);left:622.65px;top:565px">Install service</div>
<div class="btn" style="left:712px;top:559px;width:94px;height:21px"></div><div class="t f11" id="brem" style="transform:scaleX(0.9677);left:720.35px;top:565px">Remove service</div>

<div class="ln" style="left:846px;top:94px;width:3px;height:591px;background:#fff"></div><div class="ln" style="left:847px;top:95px;width:1px;height:589px"></div>
<div class="ln" style="left:55px;top:636px;width:792px;height:1px"></div><div class="ln" style="left:849px;top:636px;width:125px;height:1px"></div>

<!-- STATUS -->
<div class="t seg" id="s1" style="transform:scaleX(0.9221);left:2.15px;top:693.5px">Scan Licenses</div>
<div class="t seg" id="s2" style="transform:scaleX(0.9384);left:95.28px;top:693.5px">31980 / used 357</div>
<div class="t seg" id="s3" style="transform:scaleX(0.9802);left:287.09px;top:693.5px">administrator@VL-LANI1</div>
<div class="t seg" id="s4" style="transform:scaleX(0.9634);left:869.54px;top:693.5px">Build #11060</div>
<div class="ln" style="left:281px;top:692px;width:1px;height:15px;background:#d4d4d4"></div>
<div class="ln" style="left:865px;top:692px;width:1px;height:15px;background:#d4d4d4"></div>
<div class="ln" style="left:961px;top:692px;width:1px;height:15px;background:#d4d4d4"></div>
<svg class="a" style="left:968px;top:696px" width="12" height="11" viewBox="0 0 12 11"><g fill="#b0b0b0"><rect x="8" y="1" width="2" height="2"/><rect x="5" y="4" width="2" height="2"/><rect x="8" y="4" width="2" height="2"/><rect x="2" y="7" width="2" height="2"/><rect x="5" y="7" width="2" height="2"/><rect x="8" y="7" width="2" height="2"/></g></svg>
</body></html>
